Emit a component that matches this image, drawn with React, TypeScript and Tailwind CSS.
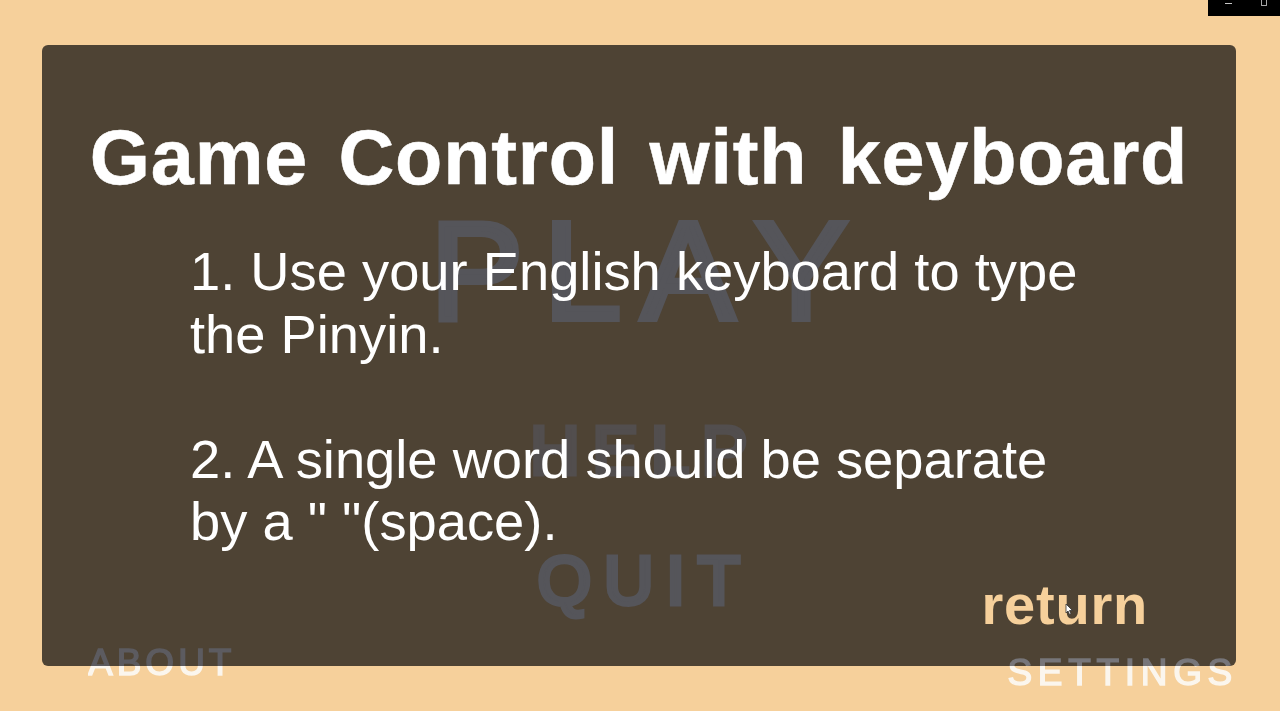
export default function App() {
  const font = "[font-family:'Liberation_Sans',Arial,sans-serif]";
  return (
    <div className={`relative h-[711px] w-full overflow-hidden bg-[#f6d09b] pt-[45px] pl-[42px] ${font}`}>
      {/* Window controls */}
      <div className="absolute right-0 top-0 flex h-4 w-[72px] items-start bg-black">
        <span className="ml-[17px] mt-[3px] h-px w-[7px] bg-[#c8c8c8]" />
        <span className="ml-[29px] h-[6px] w-[6px] rounded-b-[1px] border border-t-0 border-[#a8a8a8]" />
      </div>

      {/* Dialog panel */}
      <div className="relative h-[621px] w-[1194px] rounded-md bg-[#4e4334]">
        <div className="absolute inset-x-0 top-[140px] flex flex-col items-center text-[#55555a] [font-kerning:none] [-webkit-text-stroke:6px_#55555a]">
          <div className="text-[140px] leading-[172px] tracking-[20px] pl-[20px]">PLAY</div>
          <div className="mt-[49px] text-[69px] leading-[90px] tracking-[12.500px] pl-[12px] text-[#524e4e] [-webkit-text-stroke:5px_#524e4e]">HELP</div>
          <div className="mt-[40px] text-[69px] leading-[90px] tracking-[12.500px] pl-[12px] [-webkit-text-stroke:5px_#55555a]">QUIT</div>
        </div>

        <div className="relative flex h-full flex-col">
          <h1 className="mt-[68px] text-center text-[77.400px] font-bold leading-[88px] tracking-[0.800px] [word-spacing:8px] text-white [-webkit-text-stroke:0.5px_white]">
            Game Control with keyboard
          </h1>
          <div className="mt-[40px] w-[1062px] pl-[148px] text-[54.300px] leading-[62.500px] text-white">
            <p>1. Use your English keyboard to type the Pinyin.</p>
            <p className="mt-[62.500px]">2. A single word should be separate by a " "(space).</p>
          </div>
          <div className="relative mt-auto mb-[31px] mr-[88px] self-end text-[56px] font-bold leading-[60px] tracking-[0.800px] text-[#f6d09b]">
            return
            <svg className="absolute left-[84px] top-[28px] h-[13px] w-[9px]" viewBox="0 0 9 13">
              <path d="M1 1v9l2-2 1.500 3.500 1.500-.7L4.500 7.500H7.500z" fill="#fff" stroke="#333" strokeWidth="0.8" />
            </svg>
          </div>
        </div>
      </div>

      {/* Start menu corners, seen through the panel edge */}
      <div className="absolute inset-x-0 top-[640px] flex items-start justify-between pl-[88px] pr-[42px] text-[37px] leading-[46px] [-webkit-text-stroke:1.500px_transparent]">
        <div className="bg-[linear-gradient(180deg,#5c5b60_0_26px,#fbf6ee_26px)] bg-clip-text tracking-[4px] text-transparent">
          ABOUT
        </div>
        <div className="mt-[10px] bg-[linear-gradient(180deg,#77767a_0_16px,#fbf6ee_16px)] bg-clip-text tracking-[5.700px] text-transparent">
          SETTINGS
        </div>
      </div>
    </div>
  );
}
